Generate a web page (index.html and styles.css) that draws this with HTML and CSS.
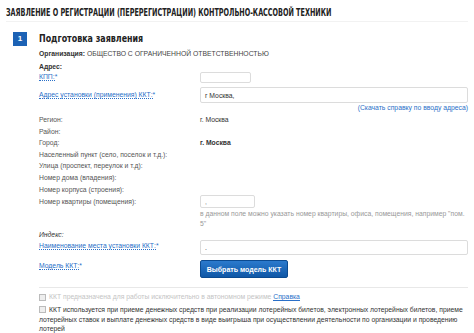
FILE: index.html
```html
<!DOCTYPE html>
<html lang="ru">
<head>
<meta charset="utf-8">
<link rel="stylesheet" href="styles.css">
</head>
<body>
<div class="page">
  <div class="title-wrap"><h1 class="title">ЗАЯВЛЕНИЕ О РЕГИСТРАЦИИ (ПЕРЕРЕГИСТРАЦИИ) КОНТРОЛЬНО-КАССОВОЙ ТЕХНИКИ</h1></div>
  <div class="step">
    <div class="badge">1</div>
    <div class="step-title">Подготовка заявления</div>
  </div>
  <div class="form">
    <div class="row r-org"><span class="full"><b>Организация:</b> ОБЩЕСТВО С ОГРАНИЧЕННОЙ ОТВЕТСТВЕННОСТЬЮ</span></div>
    <div class="row r-addr"><b class="dark">Адрес:</b></div>
    <div class="row r-kpp">
      <span class="label"><a class="lnk">КПП:</a><span class="req">*</span></span>
      <span class="val"><span class="input in-kpp"></span></span>
    </div>
    <div class="row r-inst">
      <span class="label"><a class="lnk">Адрес установки (применения) ККТ:</a><span class="req">*</span></span>
      <span class="val"><span class="input in-wide">г Москва,</span></span>
    </div>
    <div class="row r-help"><a class="lnk plain">(Скачать справку по вводу адреса)</a></div>
    <div class="row r-12"><span class="label">Регион:</span><span class="val">г. Москва</span></div>
    <div class="row r-12"><span class="label">Район:</span></div>
    <div class="row r-11"><span class="label">Город:</span><span class="val strong">г. Москва</span></div>
    <div class="row r-12"><span class="label">Населенный пункт (село, поселок и т.д.):</span></div>
    <div class="row r-11"><span class="label">Улица (проспект, переулок и т.д):</span></div>
    <div class="row r-12"><span class="label">Номер дома (владения):</span></div>
    <div class="row r-12"><span class="label">Номер корпуса (строения):</span></div>
    <div class="row r-kv">
      <span class="label">Номер квартиры (помещения):</span>
      <span class="val"><span class="input in-kv">,</span></span>
    </div>
    <div class="row r-note"><span class="label"></span><span class="val note">в данном поле можно указать номер квартиры, офиса, помещения, например "пом. 5"</span></div>
    <div class="row r-11"><span class="label"><i class="dark">Индекс:</i></span></div>
    <div class="row r-name">
      <span class="label"><a class="lnk">Наименование места установки ККТ:</a><span class="req">*</span></span>
      <span class="val"><span class="input in-wide">.</span></span>
    </div>
    <div class="row r-model">
      <span class="label"><a class="lnk">Модель ККТ:</a><span class="req">*</span></span>
      <span class="val"><button class="btn">Выбрать модель ККТ</button></span>
    </div>
    <div class="sep"></div>
    <div class="check faded"><span class="box"></span><span>ККТ предназначена для работы исключительно в автономном режиме <a class="lnk">Справка</a></span></div>
    <div class="check dark2"><span class="box"></span>ККТ используется при приеме денежных средств при реализации лотерейных билетов, электронных лотерейных билетов, приеме лотерейных ставок и выплате денежных средств в виде выигрыша при осуществлении деятельности по организации и проведению лотерей</div>
  </div>
</div>
</body>
</html>
```
FILE: styles.css
```css
* { box-sizing: border-box; }
html, body { margin: 0; padding: 0; background: #fff; }
body { font-family: "Liberation Sans", Arial, sans-serif; font-size: 6.8px; color: #555; overflow: hidden; }
.page { width: 474px; height: 333px; padding: 0 6px 0 6px; }
.title-wrap { padding-top: 6px; height: 22px; border-bottom: 1px solid #f2f2f2; }
.title {
  margin: 0; line-height: 12px; white-space: nowrap;
  font-family: "DejaVu Sans Condensed", "DejaVu Sans", sans-serif; font-stretch: condensed;
  font-weight: bold; font-size: 10.4px; color: #222;
  transform: scaleX(0.69); transform-origin: left center;
}
.step { display: flex; align-items: center; margin-top: 9px; height: 15px; }
.badge {
  width: 14px; height: 14px; margin-left: 7px; background: #1c62b5; color: #fff;
  font-weight: bold; font-size: 8px; display: flex; align-items: center; justify-content: center;
}
.step-title {
  margin-left: 12px; font-family: "DejaVu Sans Condensed", "DejaVu Sans", sans-serif; font-stretch: condensed;
  font-weight: bold; font-size: 9.6px; color: #222; transform: scaleX(0.92); transform-origin: left center;
}
.form { padding-left: 33px; margin-top: 2px; }
.row { display: flex; align-items: center; }
.label { width: 161px; flex: none; }
.val { flex: 1; color: #333; }
.r-org { height: 11px; color: #444; }
.r-org b { color: #333; }
.r-addr { height: 12px; padding-top: 2px; }
.r-11 { height: 11px; }
.r-12 { height: 12px; }
.r-kpp { height: 12px; }
.r-inst { height: 16px; margin-top: 4px; }
.r-help { height: 10px; justify-content: flex-end; }
.r-kv { height: 13px; }
.r-note { height: 21px; align-items: flex-start; padding-top: 1px; }
.note { color: #999; line-height: 10px; padding-right: 2px; }
.r-name { height: 15px; align-items: flex-start; }
.r-name .label { line-height: 12px; }
.r-model { height: 18px; margin-top: 5px; align-items: flex-start; }
.r-model .label { line-height: 12px; }
.dark { color: #333; }
.strong { font-weight: bold; color: #333; }
.lnk { color: #2a70c8; border-bottom: 1px dotted #2a70c8; text-decoration: none; line-height: 1; }
.plain { border-bottom: none; }
.req { color: #2a70c8; }
.input {
  display: flex; align-items: center; height: 100%; border: 1px solid #dcdcdc; border-radius: 2px;
  padding-left: 4px; color: #333; background: #fff;
}
.in-kpp { width: 51px; height: 11px; }
.in-wide { width: 268px; height: 16px; }
.r-name .in-wide { height: 15px; }
.in-kv { width: 55px; height: 13px; color: #888; }
.btn {
  width: 88px; height: 18px; border: 1px solid #0b4a90; border-radius: 2px; padding: 0;
  background: linear-gradient(#2b7acd, #0f57a6); color: #fff; font-family: "Liberation Sans", Arial, sans-serif;
  font-weight: bold; font-size: 7px;
}
.sep { height: 1px; background: #e8e8e8; margin: 9px 0 4px 0; }
.check { display: flex; align-items: flex-start; line-height: 10px; }
.check .box {
  width: 7px; height: 7px; border: 1px solid #bbb; background: #eee; margin: 1.5px 3px 0 0; flex: none;
}
.faded { color: #c4c4c4; }
.faded .lnk { border-bottom: 1px solid #2a70c8; }
.dark2 { color: #333; margin-top: 3px; display: block; line-height: 9.6px; padding-right: 4px; }
.dark2 .box { display: inline-block; vertical-align: -1px; margin: 0 3px 0 0; }
```
